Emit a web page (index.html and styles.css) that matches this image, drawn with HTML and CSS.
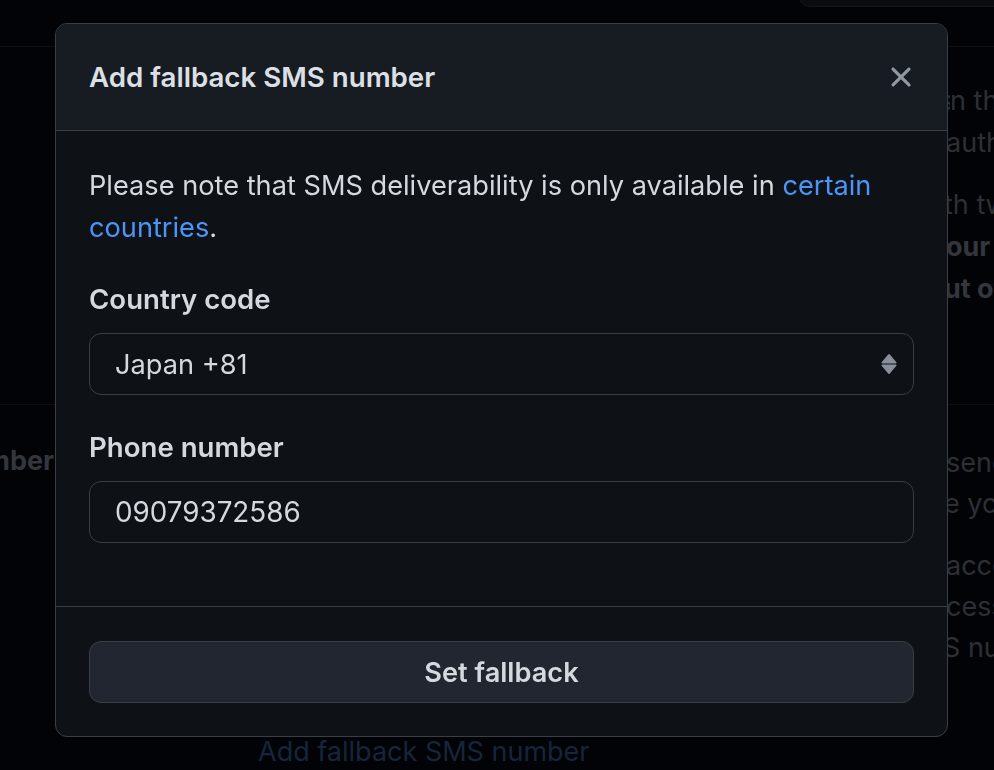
FILE: index.html
```html
<!DOCTYPE html>
<html lang="en">
<head>
<meta charset="utf-8">
<title>Add fallback SMS number</title>
<link rel="stylesheet" href="styles.css">
</head>
<body>
<div class="page">
  <div class="topbar"><div class="topbox"></div></div>
  <section class="sec sec-first">
    <div class="sec-label"></div>
    <div class="sec-body">
      <p class="bg-p">
        <span class="ln"><span class="pre p692">Two-factor authentication adds an additional layer of security to your account by requiring more o</span>n the</span>
        <span class="ln"><span class="pre p688">password to sign in. Learn more about two-factor </span>authentication.</span>
      </p>
      <p class="bg-p">
        <span class="ln"><span class="pre p686">Once enabled you will sign in with your password and a code wi</span>th two</span>
        <span class="ln strong"><span class="pre p688">Store your recovery codes in a safe place, they protect y</span>our</span>
        <span class="ln strong"><span class="pre p686">account if you are ever locked o</span>ut of it.</span>
      </p>
    </div>
  </section>
  <section class="sec sec-second">
    <div class="sec-label strong">Fallback SMS number</div>
    <div class="sec-body sec-body2">
      <p class="bg-p">
        <span class="ln"><span class="pre p688">Providing a fallback SMS number will allow GitHub to </span>send</span>
        <span class="ln"><span class="pre p686">your two-factor authentication codes to an alternate device if you los</span>e your</span>
      </p>
      <p class="bg-p">
        <span class="ln"><span class="pre p688">If you lose your primary device and no longer have </span>access</span>
        <span class="ln"><span class="pre p688">to your recovery codes, you can still regain ac</span>cess</span>
        <span class="ln"><span class="pre p685">to your account by using your fallback SM</span>S number.</span>
      </p>
      <a class="bg-link" href="#">Add fallback SMS number</a>
    </div>
  </section>
</div>

<div class="backdrop">
  <div class="dialog" role="dialog" aria-labelledby="dlg-title">
    <header class="dialog-header">
      <h1 class="dialog-title" id="dlg-title">Add fallback SMS number</h1>
      <button class="close-btn" aria-label="Close">
        <svg viewBox="0 0 16 16" width="34" height="34"><path fill="currentColor" d="M3.72 3.72a.75.75 0 0 1 1.06 0L8 6.94l3.22-3.22a.749.749 0 0 1 1.275.326.749.749 0 0 1-.215.734L9.06 8l3.22 3.22a.749.749 0 0 1-.326 1.275.749.749 0 0 1-.734-.215L8 9.06l-3.22 3.22a.751.751 0 0 1-1.042-.018.751.751 0 0 1-.018-1.042L6.94 8 3.72 4.78a.75.75 0 0 1 0-1.06Z"/></svg>
      </button>
    </header>
    <div class="dialog-body">
      <p class="note">Please note that SMS deliverability is only available in <a href="#" class="link">certain countries</a>.</p>
      <div class="group">
        <label class="label">Country code</label>
        <div class="field select">
          <span>Japan +81</span>
          <svg class="arrows" viewBox="0 0 16 20" width="16" height="20"><path fill="currentColor" d="M7.2 0.6a1 1 0 0 1 1.6 0l6.6 7.6c.5.6.1 1.3-.7 1.3H1.3c-.8 0-1.2-.7-.7-1.3Z"/><path fill="currentColor" d="M7.2 19.4a1 1 0 0 0 1.6 0l6.6-7.6c.5-.6.1-1.3-.7-1.3H1.3c-.8 0-1.2.7-.7 1.3Z"/></svg>
        </div>
      </div>
      <div class="group">
        <label class="label">Phone number</label>
        <div class="field input"><span class="digits">09079372586</span></div>
      </div>
    </div>
    <footer class="dialog-footer">
      <button class="btn">Set fallback</button>
    </footer>
  </div>
</div>
</body>
</html>
```

FILE: styles.css
```css
* { box-sizing: border-box; }
html, body {
  margin: 0;
  height: 100%;
  overflow: hidden;
  background: #020306;
  font-family: Inter, "Noto Sans", "Liberation Sans", sans-serif;
}

/* dimmed page behind the dialog */
.page {
  width: 994px;
  color: #2c3036;
  font-size: 27px;
}
.topbar {
  height: 47px;
  border-bottom: 1px solid #0d0f13;
  display: flex;
  justify-content: flex-end;
  overflow: hidden;
}
.topbox {
  width: 230px;
  height: 40px;
  margin-top: -33px;
  margin-right: -34px;
  background: #0a0c10;
  border: 1px solid #15181d;
  border-radius: 12px;
}
.sec {
  display: flex;
  border-bottom: 1px solid #0d0f13;
  overflow: hidden;
}
.sec-first { height: 358px; padding-top: 33px; }
.sec-second { height: 366px; padding-top: 37px; border-bottom: 0; }
.sec-label {
  width: 258px;
  flex: none;
  text-align: right;
  padding-right: 204px;
  white-space: nowrap;
  line-height: 42px;
  direction: rtl;
  margin-top: -2px;
}
.sec-body {
  flex: none;
  width: 900px;
  white-space: nowrap;
  display: flex;
  flex-direction: column;
}
.bg-p { margin: 0 0 20px; }
.ln { display: block; line-height: 42px; }
.sec-body2 .bg-p { margin-bottom: 21px; }
.sec-body2 .ln { line-height: 41px; }
.pre {
  display: inline-block;
  overflow: hidden;
  vertical-align: top;
  white-space: nowrap;
}
.p692 { width: 692px; }
.p688 { width: 688px; }
.p686 { width: 686px; }
.p685 { width: 685px; }
.strong { font-weight: 700; color: #33363c; }
.bg-link {
  color: #17253a;
  text-decoration: none;
  line-height: 42px;
  margin-top: 42px;
}

/* dialog */
.backdrop {
  position: fixed;
  inset: 0;
}
.dialog {
  position: absolute;
  left: 55px;
  top: 23px;
  width: 893px;
  height: 714px;
  display: flex;
  flex-direction: column;
  background: #0e1116;
  border: 1px solid #3a3f47;
  border-radius: 12px;
  overflow: hidden;
  color: #d4d9e0;
}
.dialog-header {
  height: 107px;
  flex: none;
  display: flex;
  align-items: center;
  justify-content: space-between;
  padding: 0 29px 0 33px;
  background: #171b22;
  border-bottom: 1px solid #3a3f47;
}
.dialog-title {
  margin: 0;
  font-size: 27.7px;
  font-weight: 600;
  color: #dce0e6;
}
.close-btn {
  background: none;
  border: 0;
  padding: 0;
  display: flex;
  color: #9198a1;
}
.dialog-body {
  flex: 1;
  padding: 34px 33px 0;
  font-size: 27.2px;
}
.note {
  margin: 0 0 29px;
  line-height: 42px;
}
.link {
  color: #4c95f7;
  text-decoration: none;
}
.group { margin-bottom: 31px; }
.label {
  display: block;
  font-weight: 600;
  font-size: 27.6px;
  line-height: 42px;
  margin-bottom: 13px;
  color: #d4d9e0;
}
.field {
  height: 62px;
  border: 1px solid #3a3f47;
  border-radius: 12px;
  padding: 0 16px 0 25px;
  display: flex;
  align-items: center;
  justify-content: space-between;
  color: #d4d9e0;
}
.digits { font-size: 27.8px; }
.arrows { color: #8a9099; }
.dialog-footer {
  flex: none;
  padding: 34px 33px 33px;
  border-top: 1px solid #3a3f47;
}
.btn {
  width: 100%;
  height: 62px;
  display: flex;
  align-items: center;
  justify-content: center;
  background: #212630;
  border: 1px solid #3a3f47;
  border-radius: 12px;
  color: #d4d9e0;
  font-family: inherit;
  font-size: 27.2px;
  font-weight: 600;
}
```
